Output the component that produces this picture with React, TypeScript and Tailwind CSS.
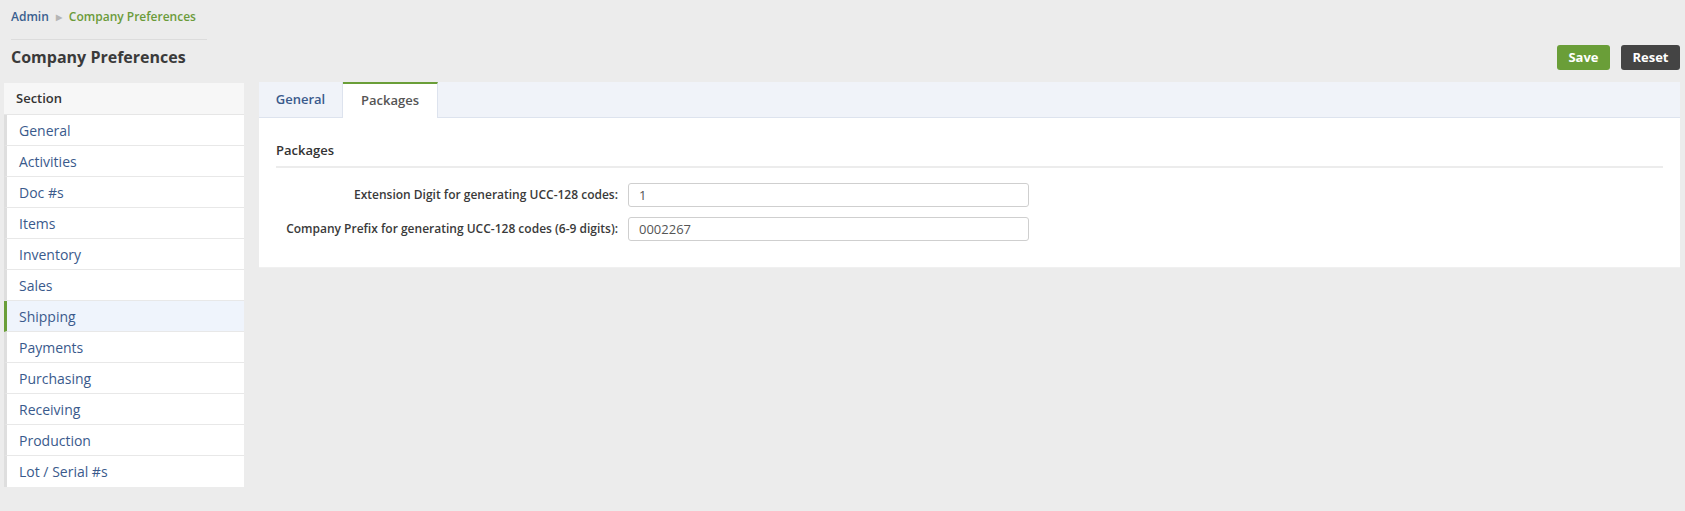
export default function App() {
  const sections = [
    "General",
    "Activities",
    "Doc #s",
    "Items",
    "Inventory",
    "Sales",
    "Shipping",
    "Payments",
    "Purchasing",
    "Receiving",
    "Production",
    "Lot / Serial #s",
  ];
  const active = "Shipping";

  return (
    <div
      className="min-h-[511px] w-full bg-[#ececec] text-[13px] text-[#333]"
      style={{ fontFamily: '"Open Sans", "Noto Sans", Arial, sans-serif' }}
    >
      <div className="px-[11px] pt-[8px]">
        <div className="flex h-[32px] w-[196px] items-start gap-[7px] border-b border-[#dcdcdc] text-[12px] font-semibold leading-[18px]">
          <span className="text-[#3a5f8f]">Admin</span>
          <span className="text-[8px] text-[#b5b5b5]">▶</span>
          <span className="text-[#6b9b3a]">Company Preferences</span>
        </div>
      </div>

      <div className="mt-[5px] flex items-start justify-between pl-[11px] pr-[5px]">
        <h1 className="text-[16px] font-bold leading-[25px] text-[#3a3a3a]">
          Company Preferences
        </h1>
        <div className="flex gap-[11px]">
          <button className="h-[25px] w-[53px] rounded-[3px] bg-[#6a9e38] text-[13px] font-bold text-white">
            Save
          </button>
          <button className="h-[25px] w-[59px] rounded-[3px] bg-[#444] text-[13px] font-bold text-white">
            Reset
          </button>
        </div>
      </div>

      <div className="mt-[12px] flex items-start gap-[15px] pl-[4px] pr-[5px]">
        <div className="mt-px w-[240px] shrink-0">
          <div className="flex h-[32px] items-center border-b border-[#e6e6e6] bg-[#f7f7f7] pl-[12px] font-semibold text-[#333]">
            Section
          </div>
          {sections.map((s, i) => (
            <div
              key={s}
              className={`flex h-[31px] items-center border-l-[3px] pl-[12px] text-[14px] text-[#3a5a8c] ${
                i < sections.length - 1 ? "border-b border-b-[#e8e8e8]" : ""
              } ${
                s === active
                  ? "border-l-[#6a9e38] bg-[#eff4fc]"
                  : "border-l-[#dedede] bg-white"
              }`}
            >
              {s}
            </div>
          ))}
        </div>

        <div className="flex-1 border-b border-[#f0f0f0] bg-white">
          <div className="flex h-[36px] border-b border-[#dde3ee] bg-[#f0f3f9]">
            <div className="flex w-[84px] items-center justify-center border-r border-[#dde3ee] font-semibold text-[#3a5a8c]">
              General
            </div>
            <div className="-mb-px flex w-[95px] items-center justify-center border-r border-t-2 border-[#dde3ee] border-t-[#6a9e38] bg-white font-semibold text-[#555]">
              Packages
            </div>
          </div>
          <div className="px-[17px] pb-[26px] pt-[23px]">
            <div className="border-b-2 border-[#ececec] pb-[7px] font-semibold leading-[18px] text-[#333]">
              Packages
            </div>
            <div className="mt-[15px] flex flex-col gap-[10px]">
              <div className="flex items-center">
                <label className="w-[352px] whitespace-nowrap pr-[10px] text-right text-[12px] font-semibold text-[#3a3a3a]">
                  Extension Digit for generating UCC-128 codes:
                </label>
                <input
                  defaultValue="1"
                  className="h-[24px] w-[401px] rounded-[3px] border border-[#cfcfcf] px-[10px] text-[13px] text-[#555] outline-none"
                />
              </div>
              <div className="flex items-center">
                <label className="w-[352px] whitespace-nowrap pr-[10px] text-right text-[12px] font-semibold text-[#3a3a3a]">
                  Company Prefix for generating UCC-128 codes (6-9 digits):
                </label>
                <input
                  defaultValue="0002267"
                  className="h-[24px] w-[401px] rounded-[3px] border border-[#cfcfcf] px-[10px] text-[13px] text-[#555] outline-none"
                />
              </div>
            </div>
          </div>
        </div>
      </div>
    </div>
  );
}
